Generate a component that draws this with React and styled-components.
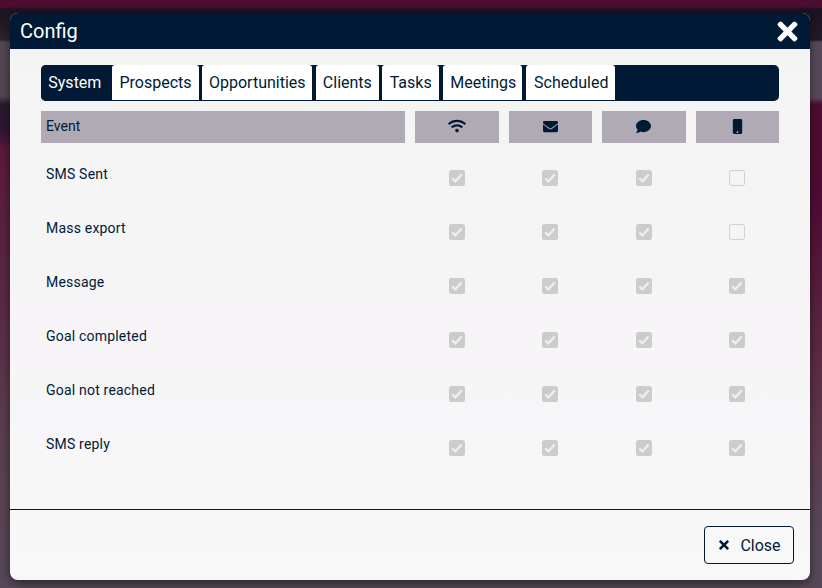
import React from 'react';
import styled, { createGlobalStyle } from 'styled-components';
import { FaWifi, FaEnvelope, FaComment, FaMobile, FaTimes } from 'react-icons/fa';

const Global = createGlobalStyle`
  html, body { margin: 0; padding: 0; height: 100%; }
  body { font-family: Roboto, "Liberation Sans", sans-serif; overflow: hidden; }
`;

const Backdrop = styled.div`
  box-sizing: border-box;
  width: 822px;
  height: 588px;
  padding: 13px 12px 8px 10px;
  background:
    linear-gradient(180deg, #4d0d30 0, #4d0d30 7px, #1b1320 9px, #2b2530 40px, #544652 42px, #544652 96px, #2a1a30 104px, #2d1630 130px, #5a1a3c 150px, #5a2a45 300px, #5a4050 440px, #574858 588px) left top / 10px 588px no-repeat,
    linear-gradient(180deg, #4d0d30 0, #4d0d30 7px, #1b1320 9px, #241a28 40px, #57485a 42px, #57485a 98px, #4d0d30 104px, #500c35 200px, #5a2640 330px, #5e3a4e 440px, #574858 540px, #574858 588px);
`;

const Dialog = styled.div`
  display: flex;
  flex-direction: column;
  height: 567px;
  border-radius: 8px;
  overflow: hidden;
  background: linear-gradient(180deg, #f5f4f5 0, #f6f4f6 300px, #f8f8f9 567px);
  box-shadow: 0 3px 10px rgba(0, 0, 0, 0.5);
`;

const Header = styled.header`
  flex: 0 0 36px;
  display: flex;
  align-items: center;
  justify-content: space-between;
  padding: 0 10px 0 10px;
  background: #001a35;
  color: #fff;
  font-size: 20px;
`;

const CloseX = styled(FaTimes)`
  width: 25px;
  height: 29px;
  color: #fff;
  margin-top: 1px;
`;

const Body = styled.div`
  flex: 1;
  padding: 16px 31px 0;
`;

const Tabs = styled.div`
  display: flex;
  gap: 3.6px;
  height: 36px;
  background: #001a35;
  border-radius: 5px;
  overflow: hidden;
`;

const Tab = styled.div`
  box-sizing: border-box;
  width: ${p => p.$w}px;
  display: flex;
  align-items: center;
  justify-content: center;
  font-size: 16px;
  padding: 0 0 1px ${p => p.$nudge || 0}px;
  color: ${p => (p.$active ? '#fff' : '#001a35')};
  background: ${p => (p.$active ? '#001a35' : '#fff')};
  border-bottom: ${p => (p.$active ? '0' : '1px solid #001a35')};
  border-radius: 3px 3px 0 0;
`;

const Grid = styled.div`
  display: grid;
  grid-template-columns: 364px 83.6px 83.4px 83.9px 83.1px;
  column-gap: 10px;
  margin-top: 10px;
  color: #001a35;
  font-size: 14px;
`;

const HeadCell = styled.div`
  height: 32px;
  display: flex;
  align-items: center;
  justify-content: ${p => (p.$left ? 'flex-start' : 'center')};
  padding-left: ${p => (p.$left ? '5px' : '0')};
  padding-bottom: 2px;
  box-sizing: border-box;
  background: #b0aab4;
  svg { display: block; }
`;

const Label = styled.div`
  height: 54px;
  padding: 23px 0 0 5px;
  box-sizing: border-box;
  line-height: 16px;
  letter-spacing: 0.2px;
`;

const BoxCell = styled.div`
  height: 54px;
  display: flex;
  justify-content: center;
  padding-top: 27px;
  box-sizing: border-box;
`;

const Check = styled.span`
  box-sizing: border-box;
  width: 16px;
  height: 16px;
  border-radius: 2.5px;
  display: flex;
  align-items: center;
  justify-content: center;
  background: ${p => (p.$on ? '#cccccc' : '#f5f5f5')};
  border: ${p => (p.$on ? '0' : '1px solid #cfcfcf')};
`;

const Footer = styled.footer`
  box-sizing: border-box;
  flex: 0 0 71px;
  border-top: 1px solid #001a35;
  display: flex;
  align-items: flex-start;
  justify-content: flex-end;
  padding: 16px 16px 0 0;
`;

const CloseButton = styled.button`
  box-sizing: border-box;
  width: 90px;
  height: 38px;
  display: flex;
  align-items: center;
  justify-content: center;
  gap: 9px;
  border: 1px solid #001a35;
  border-radius: 4px;
  background: #f8f8f9;
  color: #001a35;
  font: 16px Roboto, "Liberation Sans", sans-serif;
  padding: 0;
`;

const tabs = [
  ['System', 67.7, 0], ['Prospects', 86.4, 0], ['Opportunities', 110, 0], ['Clients', 63, 0],
  ['Tasks', 56.5, 0], ['Meetings', 79.5, 2], ['Scheduled', 89.3, 2],
];

const rows = [
  ['SMS Sent', [1, 1, 1, 0]],
  ['Mass export', [1, 1, 1, 0]],
  ['Message', [1, 1, 1, 1]],
  ['Goal completed', [1, 1, 1, 1]],
  ['Goal not reached', [1, 1, 1, 1]],
  ['SMS reply', [1, 1, 1, 1]],
];

const Tick = () => (
  <svg width="12" height="10" viewBox="0 0 12 10" fill="none">
    <path d="M1.3 5.3 4.4 8.3 10.7 1.5" stroke="#eeeeee" strokeWidth="2.4" />
  </svg>
);

export default function App() {
  return (
    <Backdrop>
      <Global />
      <Dialog>
        <Header>
          <span>Config</span>
          <CloseX />
        </Header>
        <Body>
          <Tabs>
            {tabs.map(([t, w, n], i) => (
              <Tab key={t} $w={w} $nudge={n} $active={i === 0}>{t}</Tab>
            ))}
          </Tabs>
          <Grid>
            <HeadCell $left>Event</HeadCell>
            <HeadCell><FaWifi size={18} /></HeadCell>
            <HeadCell><FaEnvelope size={15} /></HeadCell>
            <HeadCell><FaComment size={15} /></HeadCell>
            <HeadCell><FaMobile size={15} /></HeadCell>
            {rows.map(([name, vals]) => (
              <React.Fragment key={name}>
                <Label>{name}</Label>
                {vals.map((v, i) => (
                  <BoxCell key={i}>
                    <Check $on={!!v}>{v ? <Tick /> : null}</Check>
                  </BoxCell>
                ))}
              </React.Fragment>
            ))}
          </Grid>
        </Body>
        <Footer>
          <CloseButton><FaTimes size={14} />Close</CloseButton>
        </Footer>
      </Dialog>
    </Backdrop>
  );
}
